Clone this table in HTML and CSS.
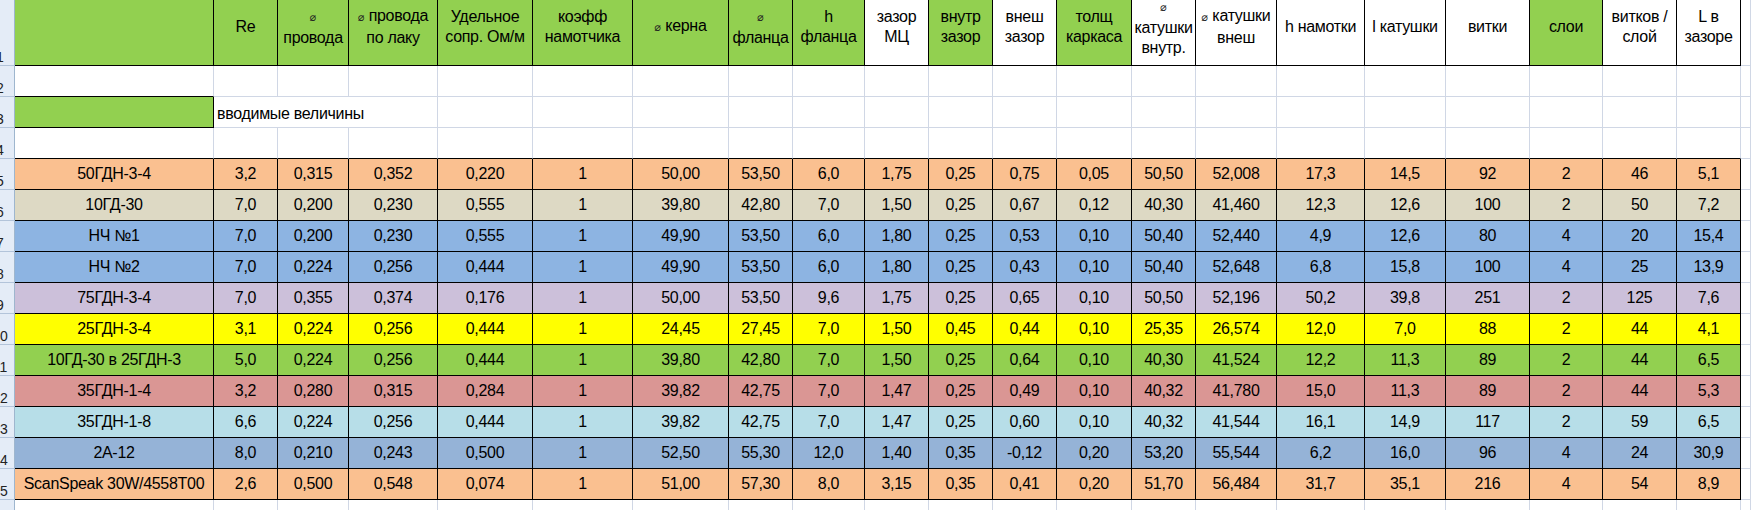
FILE: index.html
```html
<!DOCTYPE html>
<html lang="ru">
<head>
<meta charset="utf-8">
<title>Расчёт катушек</title>
<link rel="stylesheet" href="styles.css">
</head>
<body>
<div class="sheet">
  <div class="row head">
    <div class="rh"><span>1</span></div>
    <div class="c g"></div>
    <div class="c g"><span>Re</span></div>
    <div class="c g"><span><i class="d">⌀</i><br>провода</span></div>
    <div class="c g"><span><i class="d">⌀</i> провода<br>по лаку</span></div>
    <div class="c g"><span>Удельное<br>сопр. Ом/м</span></div>
    <div class="c g"><span>коэфф<br>намотчика</span></div>
    <div class="c g"><span><i class="d">⌀</i> керна</span></div>
    <div class="c g"><span><i class="d">⌀</i><br>фланца</span></div>
    <div class="c g"><span>h<br>фланца</span></div>
    <div class="c"><span>зазор<br>МЦ</span></div>
    <div class="c g"><span>внутр<br>зазор</span></div>
    <div class="c"><span>внеш<br>зазор</span></div>
    <div class="c g"><span>толщ<br>каркаса</span></div>
    <div class="c"><span><i class="d">⌀</i><br>катушки<br>внутр.</span></div>
    <div class="c"><span><i class="d">⌀</i> катушки<br>внеш</span></div>
    <div class="c"><span>h намотки</span></div>
    <div class="c"><span>l катушки</span></div>
    <div class="c"><span>витки</span></div>
    <div class="c g"><span>слои</span></div>
    <div class="c"><span>витков /<br>слой</span></div>
    <div class="c"><span>L в<br>зазоре</span></div>
    <div class="c x"></div>
  </div>

  <div class="row blank">
    <div class="rh"><span>2</span></div>
    <div class="c bb"></div>
    <div class="c"></div><div class="c"></div><div class="c"></div><div class="c"></div><div class="c"></div>
    <div class="c"></div><div class="c"></div><div class="c"></div><div class="c"></div><div class="c"></div>
    <div class="c"></div><div class="c"></div><div class="c"></div><div class="c"></div><div class="c"></div>
    <div class="c"></div><div class="c"></div><div class="c"></div><div class="c"></div><div class="c"></div>
    <div class="c x"></div>
  </div>

  <div class="row blank">
    <div class="rh"><span>3</span></div>
    <div class="c g key"></div>
    <div class="c note">вводимые величины</div>
    <div class="c"></div><div class="c"></div>
    <div class="c"></div><div class="c"></div><div class="c"></div><div class="c"></div><div class="c"></div>
    <div class="c"></div><div class="c"></div><div class="c"></div><div class="c"></div><div class="c"></div>
    <div class="c"></div><div class="c"></div><div class="c"></div><div class="c"></div><div class="c"></div>
    <div class="c x"></div>
  </div>

  <div class="row blank above">
    <div class="rh"><span>4</span></div>
    <div class="c"></div>
    <div class="c"></div><div class="c"></div><div class="c"></div><div class="c"></div><div class="c"></div>
    <div class="c"></div><div class="c"></div><div class="c"></div><div class="c"></div><div class="c"></div>
    <div class="c"></div><div class="c"></div><div class="c"></div><div class="c"></div><div class="c"></div>
    <div class="c"></div><div class="c"></div><div class="c"></div><div class="c"></div><div class="c"></div>
    <div class="c x"></div>
  </div>

  <div class="row data peach">
    <div class="rh"><span>5</span></div>
    <div class="c">50ГДН-3-4</div><div class="c">3,2</div><div class="c">0,315</div><div class="c">0,352</div><div class="c">0,220</div><div class="c">1</div><div class="c">50,00</div><div class="c">53,50</div><div class="c">6,0</div><div class="c">1,75</div><div class="c">0,25</div><div class="c">0,75</div><div class="c">0,05</div><div class="c">50,50</div><div class="c">52,008</div><div class="c">17,3</div><div class="c">14,5</div><div class="c">92</div><div class="c">2</div><div class="c">46</div><div class="c">5,1</div>
    <div class="c x"></div>
  </div>

  <div class="row data tan">
    <div class="rh"><span>6</span></div>
    <div class="c">10ГД-30</div><div class="c">7,0</div><div class="c">0,200</div><div class="c">0,230</div><div class="c">0,555</div><div class="c">1</div><div class="c">39,80</div><div class="c">42,80</div><div class="c">7,0</div><div class="c">1,50</div><div class="c">0,25</div><div class="c">0,67</div><div class="c">0,12</div><div class="c">40,30</div><div class="c">41,460</div><div class="c">12,3</div><div class="c">12,6</div><div class="c">100</div><div class="c">2</div><div class="c">50</div><div class="c">7,2</div>
    <div class="c x"></div>
  </div>

  <div class="row data blue">
    <div class="rh"><span>7</span></div>
    <div class="c">НЧ №1</div><div class="c">7,0</div><div class="c">0,200</div><div class="c">0,230</div><div class="c">0,555</div><div class="c">1</div><div class="c">49,90</div><div class="c">53,50</div><div class="c">6,0</div><div class="c">1,80</div><div class="c">0,25</div><div class="c">0,53</div><div class="c">0,10</div><div class="c">50,40</div><div class="c">52,440</div><div class="c">4,9</div><div class="c">12,6</div><div class="c">80</div><div class="c">4</div><div class="c">20</div><div class="c">15,4</div>
    <div class="c x"></div>
  </div>

  <div class="row data blue">
    <div class="rh"><span>8</span></div>
    <div class="c">НЧ №2</div><div class="c">7,0</div><div class="c">0,224</div><div class="c">0,256</div><div class="c">0,444</div><div class="c">1</div><div class="c">49,90</div><div class="c">53,50</div><div class="c">6,0</div><div class="c">1,80</div><div class="c">0,25</div><div class="c">0,43</div><div class="c">0,10</div><div class="c">50,40</div><div class="c">52,648</div><div class="c">6,8</div><div class="c">15,8</div><div class="c">100</div><div class="c">4</div><div class="c">25</div><div class="c">13,9</div>
    <div class="c x"></div>
  </div>

  <div class="row data lilac">
    <div class="rh"><span>9</span></div>
    <div class="c">75ГДН-3-4</div><div class="c">7,0</div><div class="c">0,355</div><div class="c">0,374</div><div class="c">0,176</div><div class="c">1</div><div class="c">50,00</div><div class="c">53,50</div><div class="c">9,6</div><div class="c">1,75</div><div class="c">0,25</div><div class="c">0,65</div><div class="c">0,10</div><div class="c">50,50</div><div class="c">52,196</div><div class="c">50,2</div><div class="c">39,8</div><div class="c">251</div><div class="c">2</div><div class="c">125</div><div class="c">7,6</div>
    <div class="c x"></div>
  </div>

  <div class="row data yellow">
    <div class="rh"><span>10</span></div>
    <div class="c">25ГДН-3-4</div><div class="c">3,1</div><div class="c">0,224</div><div class="c">0,256</div><div class="c">0,444</div><div class="c">1</div><div class="c">24,45</div><div class="c">27,45</div><div class="c">7,0</div><div class="c">1,50</div><div class="c">0,45</div><div class="c">0,44</div><div class="c">0,10</div><div class="c">25,35</div><div class="c">26,574</div><div class="c">12,0</div><div class="c">7,0</div><div class="c">88</div><div class="c">2</div><div class="c">44</div><div class="c">4,1</div>
    <div class="c x"></div>
  </div>

  <div class="row data green">
    <div class="rh"><span>11</span></div>
    <div class="c">10ГД-30 в 25ГДН-3</div><div class="c">5,0</div><div class="c">0,224</div><div class="c">0,256</div><div class="c">0,444</div><div class="c">1</div><div class="c">39,80</div><div class="c">42,80</div><div class="c">7,0</div><div class="c">1,50</div><div class="c">0,25</div><div class="c">0,64</div><div class="c">0,10</div><div class="c">40,30</div><div class="c">41,524</div><div class="c">12,2</div><div class="c">11,3</div><div class="c">89</div><div class="c">2</div><div class="c">44</div><div class="c">6,5</div>
    <div class="c x"></div>
  </div>

  <div class="row data rose">
    <div class="rh"><span>12</span></div>
    <div class="c">35ГДН-1-4</div><div class="c">3,2</div><div class="c">0,280</div><div class="c">0,315</div><div class="c">0,284</div><div class="c">1</div><div class="c">39,82</div><div class="c">42,75</div><div class="c">7,0</div><div class="c">1,47</div><div class="c">0,25</div><div class="c">0,49</div><div class="c">0,10</div><div class="c">40,32</div><div class="c">41,780</div><div class="c">15,0</div><div class="c">11,3</div><div class="c">89</div><div class="c">2</div><div class="c">44</div><div class="c">5,3</div>
    <div class="c x"></div>
  </div>

  <div class="row data aqua">
    <div class="rh"><span>13</span></div>
    <div class="c">35ГДН-1-8</div><div class="c">6,6</div><div class="c">0,224</div><div class="c">0,256</div><div class="c">0,444</div><div class="c">1</div><div class="c">39,82</div><div class="c">42,75</div><div class="c">7,0</div><div class="c">1,47</div><div class="c">0,25</div><div class="c">0,60</div><div class="c">0,10</div><div class="c">40,32</div><div class="c">41,544</div><div class="c">16,1</div><div class="c">14,9</div><div class="c">117</div><div class="c">2</div><div class="c">59</div><div class="c">6,5</div>
    <div class="c x"></div>
  </div>

  <div class="row data steel">
    <div class="rh"><span>14</span></div>
    <div class="c">2А-12</div><div class="c">8,0</div><div class="c">0,210</div><div class="c">0,243</div><div class="c">0,500</div><div class="c">1</div><div class="c">52,50</div><div class="c">55,30</div><div class="c">12,0</div><div class="c">1,40</div><div class="c">0,35</div><div class="c">-0,12</div><div class="c">0,20</div><div class="c">53,20</div><div class="c">55,544</div><div class="c">6,2</div><div class="c">16,0</div><div class="c">96</div><div class="c">4</div><div class="c">24</div><div class="c">30,9</div>
    <div class="c x"></div>
  </div>

  <div class="row data peach">
    <div class="rh"><span>15</span></div>
    <div class="c">ScanSpeak 30W/4558T00</div><div class="c">2,6</div><div class="c">0,500</div><div class="c">0,548</div><div class="c">0,074</div><div class="c">1</div><div class="c">51,00</div><div class="c">57,30</div><div class="c">8,0</div><div class="c">3,15</div><div class="c">0,35</div><div class="c">0,41</div><div class="c">0,20</div><div class="c">51,70</div><div class="c">56,484</div><div class="c">31,7</div><div class="c">35,1</div><div class="c">216</div><div class="c">4</div><div class="c">54</div><div class="c">8,9</div>
    <div class="c x"></div>
  </div>

  <div class="row blank">
    <div class="rh"><span>16</span></div>
    <div class="c"></div>
    <div class="c"></div><div class="c"></div><div class="c"></div><div class="c"></div><div class="c"></div>
    <div class="c"></div><div class="c"></div><div class="c"></div><div class="c"></div><div class="c"></div>
    <div class="c"></div><div class="c"></div><div class="c"></div><div class="c"></div><div class="c"></div>
    <div class="c"></div><div class="c"></div><div class="c"></div><div class="c"></div><div class="c"></div>
    <div class="c x"></div>
  </div>
</div>
</body>
</html>
```
FILE: styles.css
```css
:root {
  --grid: #d0d7e5;
  --line: #000;
  --hdr: #e4ecf7;
  --hdr-line: #b3c4da;
}

html, body {
  margin: 0;
  padding: 0;
  height: 510px;
  overflow: hidden;
  background: #fff;
}

.sheet {
  display: grid;
  grid-template-columns: 15px 199px 64px 71px 89px 95px 100px 96px 64px 72px 64px 64px 64px 75px 64px 81px 88px 81px 84px 73px 74px 64px 1fr;
  grid-template-rows: 66px repeat(15, 31px);
  font-family: "Liberation Sans", Arial, sans-serif;
  font-size: 16px;
  color: #000;
}

.row {
  display: contents;
}

.rh {
  box-sizing: border-box;
  background: var(--hdr);
  border-right: 1px solid #9eb6ce;
  border-bottom: 1px solid var(--hdr-line);
  overflow: hidden;
  display: flex;
  align-items: flex-end;
}

.rh span {
  flex: none;
  width: 30px;
  margin-left: -15px;
  text-align: center;
  font-size: 14px;
  line-height: 14px;
  padding-bottom: 1px;
  color: #222;
}

.c {
  box-sizing: border-box;
  border-right: 1px solid var(--grid);
  border-bottom: 1px solid var(--grid);
  display: flex;
  align-items: center;
  justify-content: center;
  white-space: nowrap;
  letter-spacing: -0.3px;
  min-width: 0;
}

/* header row */
.head .c {
  border-color: var(--line);
  padding-bottom: 11px;
  line-height: 20px;
  text-align: center;
}

.head .c.x {
  border-color: var(--grid);
}

.d {
  font-style: normal;
  font-family: "DejaVu Sans", sans-serif;
  font-size: 11px;
  letter-spacing: 0;
  color: #222;
}

.g {
  background: #92d050;
}

/* blank rows */
.bb {
  border-bottom-color: var(--line);
}

.key {
  border-right-color: var(--line);
  border-bottom-color: var(--line);
}

.note {
  grid-column: span 3;
  justify-content: flex-start;
  padding-left: 3px;
  padding-top: 3px;
}

.above .c:not(.x) {
  border-bottom-color: var(--line);
}

/* data rows */
.data .c {
  border-color: var(--line);
}

.data .c.x {
  border-color: var(--grid);
  background: #fff;
}

.peach .c { background: #fac090; }
.tan .c { background: #ddd9c4; }
.blue .c { background: #8db4e2; }
.lilac .c { background: #ccc0da; }
.yellow .c { background: #ffff00; }
.green .c { background: #92d050; }
.rose .c { background: #da9694; }
.aqua .c { background: #b7dee8; }
.steel .c { background: #95b3d7; }
```
